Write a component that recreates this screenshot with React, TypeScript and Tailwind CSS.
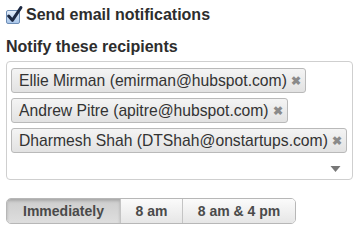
const recipients = [
  "Ellie Mirman (emirman@hubspot.com)",
  "Andrew Pitre (apitre@hubspot.com)",
  "Dharmesh Shah (DTShah@onstartups.com)",
];

const App = () => {
  return (
    <main
      className="w-[362px] h-[234px] bg-white text-[#333] pl-[6px] pt-[5px]"
      style={{ fontFamily: '"Liberation Sans", Arial, sans-serif' }}
    >
      <label className="flex items-center h-[20px]">
        <span className="relative w-[14px] h-[14px] mt-[3px] rounded-[2px] border border-[#6d8db5] bg-gradient-to-b from-[#e3eefb] to-[#a9c6ea]">
          <svg viewBox="0 0 16 16" className="absolute left-[-1px] top-[-5px] w-[17px] h-[17px]">
            <path d="M2.5 9.5 L6 13.5 L14 1.5" fill="none" stroke="#1d2a44" strokeWidth="2.8" strokeLinecap="round" strokeLinejoin="round" />
          </svg>
        </span>
        <span className="ml-[6px] text-[16px] font-bold text-[#2d2d2d]">Send email notifications</span>
      </label>

      <h2 className="mt-[12px] text-[16px] font-bold text-[#2d2d2d] leading-[20px]">Notify these recipients</h2>

      <div className="mt-[4px] w-[347px] h-[119px] border border-[#cfcfcf] rounded-[4px] relative pl-[4px] pt-[6px] flex flex-col items-start gap-[5px]">
        {recipients.map((r) => (
          <div
            key={r}
            className="h-[25px] flex items-center whitespace-nowrap pl-[7px] pr-[4px] border border-[#b9b9b9] rounded-[3px] bg-gradient-to-b from-[#f4f4f4] to-[#e2e2e2] text-[15.7px] text-[#333]"
          >
            <span>{r}</span>
            <span className="ml-[4px] text-[#8a8a8a] text-[12px] font-bold leading-none">✖</span>
          </div>
        ))}
        <svg viewBox="0 0 10 6" className="absolute right-[11px] bottom-[7px] w-[11px] h-[6px]">
          <path d="M0 0 L10 0 L5 6 Z" fill="#777" />
        </svg>
      </div>

      <div className="mt-[18px] inline-flex h-[26px] border border-[#b7b7b7] rounded-[5px] overflow-hidden text-[14px] font-bold text-[#4a4a4a]">
        <button className="w-[113px] bg-gradient-to-b from-[#cdcdcd] to-[#dedede] shadow-[inset_0_2px_3px_rgba(0,0,0,0.18)]">
          Immediately
        </button>
        <button className="w-[62px] border-l border-[#c4c4c4] bg-gradient-to-b from-[#fbfbfb] to-[#e6e6e6]">
          8 am
        </button>
        <button className="w-[113px] border-l border-[#c4c4c4] bg-gradient-to-b from-[#fbfbfb] to-[#e6e6e6]">
          8 am &amp; 4 pm
        </button>
      </div>
    </main>
  );
};

export default App;
